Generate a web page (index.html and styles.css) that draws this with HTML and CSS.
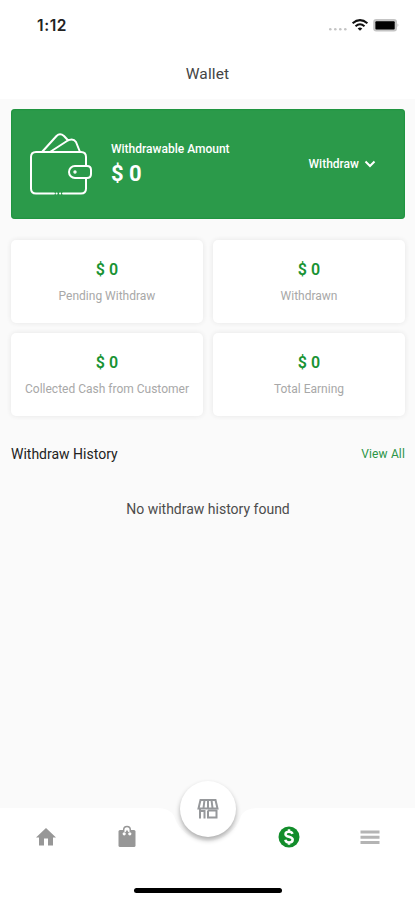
FILE: index.html
```html
<!DOCTYPE html>
<html lang="en">
<head>
<meta charset="utf-8">
<meta name="viewport" content="width=device-width, initial-scale=1">
<title>Wallet</title>
<link rel="stylesheet" href="styles.css">
</head>
<body>
<div class="app">
  <header class="header">
    <div class="status">
      <span class="time">1:12</span>
      <svg class="status-icons" width="72" height="16" viewBox="0 0 72 16">
        <g fill="#c4c4c4"><circle cx="2.3" cy="11.2" r="1.3"/><circle cx="7.3" cy="11.2" r="1.3"/><circle cx="12.3" cy="11.2" r="1.3"/><circle cx="17.3" cy="11.2" r="1.3"/></g>
        <g fill="none" stroke="#111" stroke-width="2"><path d="M24.6 5.3Q32 -1 39.4 5.3"/><path d="M27.5 8.3Q32 4.2 36.5 8.3"/></g>
        <path d="M29.7 10.4Q32 8.7 34.3 10.4L32 12.7Z" fill="#111"/>
        <rect x="45.2" y="1" width="23.8" height="12.6" rx="3" fill="#c4c4c4"/>
        <rect x="47.4" y="3.2" width="19.3" height="8.2" rx="1" fill="#000"/>
        <path d="M69.6 5.2q1.8 2 0 4z" fill="#aaa"/>
      </svg>
    </div>
    <h1 class="title">Wallet</h1>
  </header>
  <main class="content">
    <section class="balance">
      <svg class="wallet" width="64" height="64" viewBox="0 0 64 64" fill="none" stroke="#fff" stroke-width="2" stroke-linecap="round" stroke-linejoin="round">
        <path d="M25 61.5H7Q2 61.5 2 56.5V25Q2 20 7 20H52Q57 20 57 25V33.5M57 46V56.5Q57 61.5 52 61.5H34M27.5 61.5h.2M31 61.5h.2"/>
        <path d="M13 20L27.5 4Q31 .5 35 4L38.5 7.8M21 20L38 9Q44 5.5 47 10L51 20"/>
        <path d="M46 34H58Q62 34 62 38V42Q62 46 58 46H46A6 6 0 0 1 46 34Z"/><circle cx="46" cy="40" r=".7"/>
      </svg>
      <div class="amount"><span class="caption">Withdrawable Amount</span><strong>$ 0</strong></div>
      <div class="withdraw"><span>Withdraw</span><svg width="12" height="8" viewBox="0 0 12 8"><path d="M1.5 1.5L6 6L10.5 1.5" fill="none" stroke="#fff" stroke-width="2"/></svg></div>
    </section>
    <section class="stats">
      <div class="stat"><strong>$ 0</strong><span>Pending Withdraw</span></div>
      <div class="stat"><strong>$ 0</strong><span>Withdrawn</span></div>
      <div class="stat"><strong>$ 0</strong><span>Collected Cash from Customer</span></div>
      <div class="stat"><strong>$ 0</strong><span>Total Earning</span></div>
    </section>
    <div class="history-head"><h2>Withdraw History</h2><span class="view-all">View All</span></div>
    <p class="empty">No withdraw history found</p>
  </main>
  <nav class="nav">
    <svg class="nav-shape" width="415" height="92" viewBox="0 0 415 92"><path d="M0 0H157Q170 0 174 8A35 35 0 0 0 241 8Q245 0 258 0H415V92H0Z" fill="#fff"/></svg>
    <div class="tabs">
      <span class="tab"><svg width="24" height="24" viewBox="0 0 24 24" fill="#979797"><path d="M10 20.5v-7h4v7h5v-8h3L12 3 2 12.5h3v8z"/></svg></span>
      <span class="tab"><svg width="24" height="24" viewBox="0 0 24 24"><path d="M5 5H19Q20.5 5 20.5 6.5V20.5Q20.5 22 19 22H5Q3.500 22 3.500 20.500V6.500Q3.500 5 5 5Z" fill="#979797"/><path d="M8.700 7V4.800a3.300 3.300 0 0 1 6.600 0V7" fill="#fff" stroke="#979797" stroke-width="1.500"/><path d="M9.700 8.500L12 4.800L14.300 8.500Z" fill="#979797"/><circle cx="9.200" cy="8.800" r="1.600" fill="#fff"/><circle cx="14.800" cy="8.800" r="1.600" fill="#fff"/></svg></span>
      <span class="tab"></span>
      <span class="tab"><svg width="24" height="24" viewBox="0 0 24 24"><circle cx="12" cy="12" r="10.5" fill="#128d2b"/><path d="M15.5 8.8C15 7.2 13.8 6.7 12 6.7C10 6.7 8.5 7.5 8.5 9.2C8.5 12.6 15.7 11 15.7 14.7C15.7 16.5 14.2 17.4 12 17.4C9.9 17.4 8.6 16.5 8.3 14.8M12 4.2V7M12 17V19.8" fill="none" stroke="#fff" stroke-width="2.5"/></svg></span>
      <span class="tab"><svg width="24" height="24" viewBox="0 0 24 24"><path d="M2.5 7H21.5M2.5 12.3H21.5M2.5 17.5H21.5" stroke="#b4b4b4" stroke-width="2.9"/></svg></span>
    </div>
    <div class="fab"><svg width="24" height="24" viewBox="0 0 24 24" fill="none" stroke="#96989b" stroke-width="2"><path d="M4.500 3H19.500L21.500 11.500H2.500ZM8.500 3L7.500 11M12 3V11M15.500 3L16.500 11"/><path d="M4 11.500V21.500M3 14H8.500V21.500M12 13.500V20.500H20.500V13.500H12"/></svg></div>
    <div class="home-bar"></div>
  </nav>
</div>
</body>
</html>
```
FILE: styles.css
```css
* { box-sizing: border-box; }
body { margin: 0; font-family: Roboto, "Liberation Sans", sans-serif; background: #fafafa; }
h1, h2, p { margin: 0; font-weight: 400; }
svg { display: block; }
.app { width: 415px; height: 900px; display: flex; flex-direction: column; overflow: hidden; }
.header { height: 99px; background: #fff; flex: none; }
.status { height: 52px; padding: 0 15px 0 37px; display: flex; justify-content: space-between; align-items: center; }
.time { font: 600 15.5px/20px Inter, sans-serif; letter-spacing: .6px; color: #222; }
.title { font-size: 15.5px; line-height: 20px; margin-top: 12px; text-align: center; color: #444; letter-spacing: .15px; }
.content { flex: 1; padding: 10px 10px 0 11px; }
.balance { height: 110px; border-radius: 4px; background: #2b9a4a; box-shadow: inset 0 0 2px #078527; color: #fff; display: flex; align-items: center; padding: 0 29px 0 18px; }
.wallet { flex: none; }
.amount { margin: 0 0 0 18px; display: flex; flex-direction: column; white-space: nowrap; }
.caption { font-size: 12px; line-height: 18px; font-weight: 500; }
.amount strong { font-size: 22px; line-height: 31px; font-weight: 700; }
.withdraw { margin-left: auto; display: flex; align-items: center; gap: 5px; font-size: 12px; font-weight: 500; }
.stats { margin-top: 20.5px; display: grid; grid-template-columns: 192px 192px; grid-auto-rows: 83px; gap: 10.5px 10px; }
.stat { background: #fff; border-radius: 5px; box-shadow: 0 0 5px #e6e6e6; display: flex; flex-direction: column; align-items: center; padding-top: 19px; color: #a8a8a8; font-size: 12px; line-height: 18px; white-space: nowrap; }
.stat strong { font-size: 16px; line-height: 22px; color: #189333; font-weight: 600; margin-bottom: 6px; }
.history-head { display: flex; justify-content: space-between; align-items: center; margin-top: 28px; height: 20px; }
.history-head h2 { font-size: 14px; color: #222; }
.view-all { font-size: 12px; letter-spacing: .15px; color: #2b9547; }
.empty { text-align: center; font-size: 14px; line-height: 20px; margin-top: 35px; color: #4c4c4c; }
.nav { position: relative; height: 92px; flex: none; }
.nav-shape { position: absolute; inset: 0; }
.tabs { position: relative; display: grid; grid-template-columns: repeat(5, 81px); justify-content: center; padding-top: 17px; }
.tab { display: flex; justify-content: center; height: 24px; }
.fab { position: absolute; left: 180px; top: -27px; width: 56px; height: 56px; border-radius: 50%; background: #fff; box-shadow: 0 3px 5px #00000050; display: flex; align-items: center; justify-content: center; }
.home-bar { position: absolute; left: 134px; top: 79.5px; width: 148px; height: 5px; border-radius: 3px; background: #000; }
```
